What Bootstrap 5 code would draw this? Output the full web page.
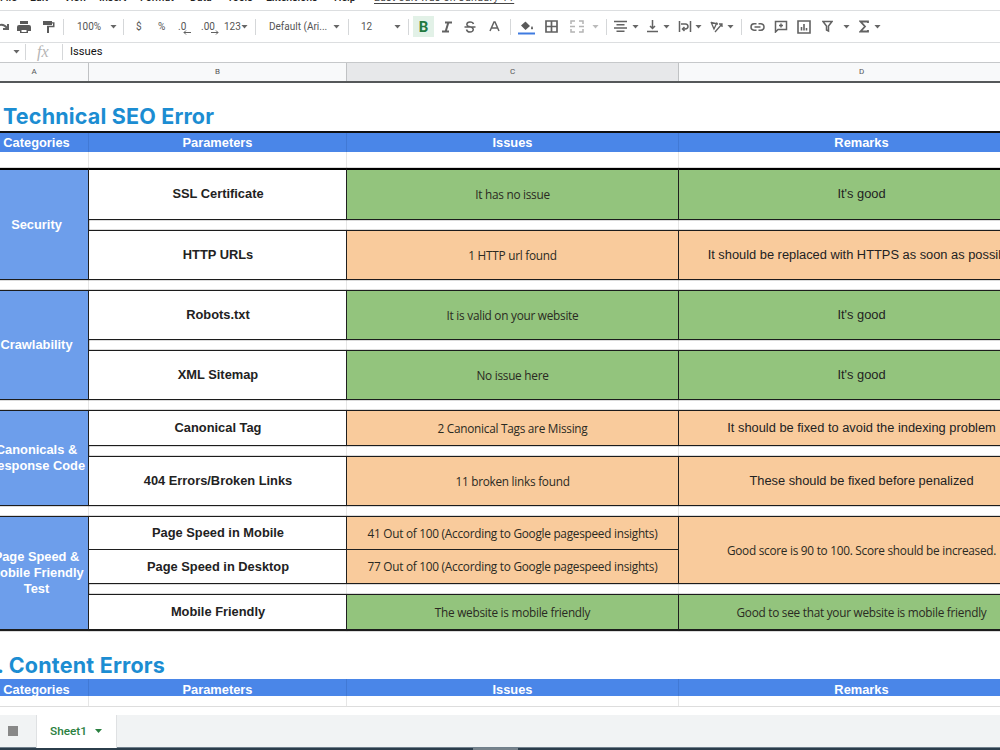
<!DOCTYPE html>
<html lang="en">
<head>
<meta charset="utf-8">
<meta name="viewport" content="width=device-width, initial-scale=1">
<title>SEO audit sheet</title>
<link rel="stylesheet" href="https://cdn.jsdelivr.net/npm/bootstrap@5.3.0/dist/css/bootstrap.min.css">
<style>
body{height:750px;overflow:hidden;background:#fff;font-family:"Liberation Sans",sans-serif;color:#222;font-size:12.85px;line-height:16px}
.menus{height:10px;font:500 10.5px/12px Roboto,sans-serif;color:#222}
.menus>div{display:grid;grid-template-columns:30px 34px 35px 41px 50px 37px 39px 68px 40px 160px;margin-top:-8px;white-space:nowrap}
.menus u{color:#444;font-weight:400;text-underline-offset:2px;letter-spacing:.35px}
.tools{height:33px;border-top:1px solid #dcdee0;border-bottom:1px solid #dcdee0;display:grid;align-items:center;white-space:nowrap;color:#555;font:10px/14px Roboto,sans-serif;
grid-template-columns:17px 25px 21px 14px 33px 13px 13px 22px 20px 23px 23px 17px 14px 14px 64px 15px 13px 33px 14px 5px 28px 23px 25px 21px 8px 27px 25px 22px 14px 8px 18px 15px 16px 15px 17px 15px 17px 14px 9px 24px 23px 25px 21px 16px 15px 20px}
.tools svg{display:block;fill:none;stroke:#626262;stroke-width:1.5}
.tools .solid{fill:#5a5a5a;stroke:none}
.vsep{width:1px;height:16px;background:#d5d7d9}
.tri{width:7px;height:4px;background:#666;clip-path:polygon(0 0,100% 0,50% 100%)}
.tri.dim{background:#bbb}
.dec{position:relative}
.dec svg{position:absolute;left:5px;top:10px}
.boldbtn{width:21px;height:21px;background:#e2f1e7;color:#22793f;font-size:15px}
.fbar{height:19px;color:#111;font:11.2px/16px Roboto,sans-serif;padding-bottom:2px}
.fx{font:italic 16px/16px "Liberation Serif",serif;color:#b5b5b5;margin-left:11px;width:25px}
.namebox{margin-left:13px;margin-right:5px}
.fval{margin-left:7px}
.sheet{width:1062px;margin-left:-17px}
.gridcols{display:grid;grid-template-columns:106px 258px 332px 366px}
.letters{height:21px;border-top:1px solid #c6c8ca;border-bottom:2px solid #55585a;background:#f8f9fa;font:8px/18px Roboto,sans-serif;color:#555;text-align:center}
.letters>div{border-right:1px solid #c0c2c4}
.letters>div:first-child{padding-right:3px}
.letters .picked{background:#e7e8ea}
.heading{height:48px;font:700 21.5px/26px Inter,sans-serif;letter-spacing:.17px;color:#1c8dd2;white-space:pre}
.h-one{padding:20px 0 0 20px}
.h-two{padding-top:21px;letter-spacing:.2px}
.hrow{background:#4a86e8;color:#fff;font-weight:700;text-align:center}
.hrow>div{border-right:1px solid #4179d5}
.hrow.top{height:21px;border-top:2px solid #111;line-height:19px}
.hrow.low{height:17px;line-height:21px}
.hrow>div:first-child,.cat{padding-left:2px}
.blankrow{height:16px}
.blankrow.low{height:11px;border-bottom:1px solid #ddd}
.blankrow>div{border-right:1px solid #e6e6e6}
.body-rows{grid-template-rows:52px 10px 50px 10px 50px 10px 50px 10px 36px 10px 50px 10px 34px 34px 10px 37px;background:linear-gradient(#e6e6e6,#e6e6e6) 105px 0/1px 100% no-repeat,linear-gradient(#e6e6e6,#e6e6e6) 363px 0/1px 100% no-repeat,linear-gradient(#e6e6e6,#e6e6e6) 695px 0/1px 100% no-repeat}
.cellx{display:flex;align-items:center;justify-content:center;text-align:center;white-space:nowrap;border:solid #1c1c1c;border-width:1px 1px 1px 0;box-shadow:0 0 1px #333}
.cat{background:#6d9eeb;color:#fff;font-weight:700;grid-column:1}
.par{background:#fff;font-weight:700;grid-column:2;padding-left:1px}
.iss{grid-column:3}.rem{grid-column:4}
.ok{background:#93c47d}.warn{background:#f9cb9c}
.calib{font-family:"Open Sans",sans-serif;font-size:11.8px;letter-spacing:-.26px;color:#2a2a22;padding-bottom:1px}
.first{border-top-width:2px;border-top-color:#000}
.last{border-bottom-width:2px}
.r1{grid-row:1}.r3{grid-row:3}.r5{grid-row:5}.r7{grid-row:7}.r9{grid-row:9}.r11{grid-row:11}.r13{grid-row:13}.r14{grid-row:14;border-top:0}.r16{grid-row:16}
.r1{padding-bottom:1px}
.g1{grid-row:1/4}.g2{grid-row:5/8}.g3{grid-row:9/12}.g4{grid-row:13/17}.m13{grid-row:13/15}
.tabs{height:32px;margin-top:8px;background:#f1f3f4}
.tab1{width:81px;margin-left:18px;background:#fff;color:#2a8040;font:500 11.8px/33px Roboto,sans-serif;border:solid #dfe1e3;border-width:0 1px;padding-left:13px}
.tab1 .tri{background:#2a8040}
.sq{width:10px;height:10px;background:#888;margin-left:8px}
.dock{height:3px;background:#2b3d4b;border-top:1px solid #71808c}
.dock div{width:45px;height:2px;background:#76828b;margin-left:473px}
</style>
</head>
<body>
<div class="menus overflow-hidden"><div><span>File</span><span>Edit</span><span>View</span><span>Insert</span><span>Format</span><span>Data</span><span>Tools</span><span>Extensions</span><span>Help</span><u>Last edit was on January 11</u></div></div>
<div class="tools">
<svg width="10" height="12"><path d="M0 4Q4 3 7 7M8 3V8H3" stroke-width="2"/></svg>
<svg width="14" height="14" class="solid"><path d="M3 1h8v3H3zM2 5h10q2 0 2 2v4h-3v2H3v-2H0V7q0-2 2-2zm2.500 5v2h5v-2z" fill-rule="evenodd"/></svg>
<svg width="13" height="14" class="solid"><path d="M1 1h9v1.200h2.500v5H7V13H5V5.800h6V3.500H10V5H1z"/></svg>
<i class="vsep"></i><span>100%</span><i class="tri"></i><i class="vsep"></i>
<span>$</span><span>%</span>
<span class="dec">.0<svg width="8" height="5"><path d="M8 2.500H1M3 .5L1 2.500L3 4.500" stroke-width="1"/></svg></span>
<span class="dec">.00<svg width="15" height="5"><path d="M5 2.500H12M10 .5L12 2.500L10 4.500" stroke-width="1"/></svg></span>
<span>123</span><i class="tri"></i><i class="vsep"></i>
<span>Default (Ari...</span><i class="tri"></i><i class="vsep"></i><span>12</span><i class="tri"></i><i class="vsep"></i>
<b class="boldbtn d-flex align-items-center justify-content-center">B</b>
<svg width="12" height="14"><path d="M4 2.500H11M1 11.500H8M7.500 2L4.500 12" stroke-width="2"/></svg>
<svg width="12" height="14"><path d="M9.500 4Q9 2 6 2T2.800 4.500Q3 6 6 6.700T9.300 9.500Q9 12 6 12T2.500 9.500M.5 7H11.500" stroke-width="1.500"/></svg>
<svg width="11" height="14"><path d="M1 11L5 2h1L10 11M2.500 8H8.500"/></svg>
<i class="vsep"></i>
<svg width="17" height="17"><path d="M5 1L12 8L7.500 12L3 7.500L7.500 3.500z" class="solid"/><path d="M14 8q2 3 0 3.500q-2-.5 0-3.500z" class="solid"/><path d="M0 15.500H17" stroke="#3f7be0" stroke-width="2"/></svg>
<svg width="13" height="13"><path d="M1 1H12V12H1zM6.500 1V12M1 6.500H12" stroke-width="1.700"/></svg>
<svg width="14" height="13"><path d="M5 1H1V4M9 1H13V4M5 12H1V9M9 12H13V9M0 6.500H5M14 6.500H9" stroke="#b4b4b4"/></svg>
<i class="tri dim"></i><i class="vsep"></i>
<svg width="13" height="13"><path d="M0 1.500H13M2.500 4.800H10.500M0 8H13M2.500 11.300H10.500"/></svg><i class="tri"></i>
<svg width="11" height="13"><path d="M5.500 0V8M3 6L5.500 8.500L8 6M0 11.500H11"/></svg><i class="tri"></i>
<svg width="14" height="13"><path d="M1.500 1V12M12.500 1V12M3 4H7.500Q10 4.200 10 6.500T7 9H4.500M6.500 7L4.500 9L6.500 11" stroke-width="1.500"/></svg><i class="tri"></i>
<svg width="13" height="13"><path d="M1 2L4 9L7 2.500M1 2.500L8 4M5 12L12 4M9 4H12V7" stroke-width="1.300"/></svg><i class="tri"></i><i class="vsep"></i>
<svg width="15" height="10"><path d="M6.500 1.800H4Q1 2 1 5T4 8.200H6.500M8.500 1.800H11Q14 2 14 5T11 8.200H8.500M4.500 5H10.500"/></svg>
<svg width="14" height="13"><path d="M1.500 12V1.500H12.500V9.500H4zM7 3.500V7.500M5 5.500H9"/></svg>
<svg width="14" height="14"><path d="M1 1H13V13H1zM4.500 10.500V7M7 10.500V4M9.500 10.500V8" stroke-width="1.600"/></svg>
<svg width="11" height="13"><path d="M1 1.500H10L6.500 6V11L4.500 10V6z"/></svg><i class="tri"></i>
<svg width="10" height="13"><path d="M9 3V1.500H1.500L6 6.500L1.500 11.500H9V10" stroke-width="1.800"/></svg><i class="tri"></i>
</div>
<div class="fbar d-flex align-items-center"><i class="tri namebox"></i><i class="vsep"></i><span class="fx">fx</span><i class="vsep"></i><span class="fval">Issues</span></div>
<main class="sheet">
<div class="gridcols letters"><div>A</div><div>B</div><div class="picked">C</div><div>D</div></div>
<div class="heading h-one">Technical SEO Error</div>
<div class="gridcols hrow top"><div>Categories</div><div>Parameters</div><div>Issues</div><div>Remarks</div></div>
<div class="gridcols blankrow"><div></div><div></div><div></div><div></div></div>
<div class="gridcols body-rows">
<div class="cellx cat g1 first">Security</div><div class="cellx cat g2">Crawlability</div><div class="cellx cat g3">Canonicals &amp;<br>Response Code</div><div class="cellx cat g4 last">Page Speed &amp;<br>Mobile Friendly<br>Test</div>
<div class="cellx par r1 first">SSL Certificate</div><div class="cellx iss r1 first ok calib">It has no issue</div><div class="cellx rem r1 first ok">It's good</div>
<div class="cellx par r3">HTTP URLs</div><div class="cellx iss r3 warn calib">1 HTTP url found</div><div class="cellx rem r3 warn">It should be replaced with HTTPS as soon as possible</div>
<div class="cellx par r5">Robots.txt</div><div class="cellx iss r5 ok calib">It is valid on your website</div><div class="cellx rem r5 ok">It's good</div>
<div class="cellx par r7">XML Sitemap</div><div class="cellx iss r7 ok calib">No issue here</div><div class="cellx rem r7 ok">It's good</div>
<div class="cellx par r9">Canonical Tag</div><div class="cellx iss r9 warn calib">2 Canonical Tags are Missing</div><div class="cellx rem r9 warn">It should be fixed to avoid the indexing problem</div>
<div class="cellx par r11">404 Errors/Broken Links</div><div class="cellx iss r11 warn calib">11 broken links found</div><div class="cellx rem r11 warn">These should be fixed before penalized</div>
<div class="cellx par r13">Page Speed in Mobile</div><div class="cellx iss r13 warn calib">41 Out of 100 (According to Google pagespeed insights)</div>
<div class="cellx par r14">Page Speed in Desktop</div><div class="cellx iss r14 warn calib">77 Out of 100 (According to Google pagespeed insights)</div><div class="cellx rem m13 warn calib">Good score is 90 to 100. Score should be increased.</div>
<div class="cellx par r16 last">Mobile Friendly</div><div class="cellx iss r16 ok calib last">The website is mobile friendly</div><div class="cellx rem r16 ok calib last">Good to see that your website is mobile friendly</div>
</div>
<div class="heading h-two">2. Content Errors</div>
<div class="gridcols hrow low"><div>Categories</div><div>Parameters</div><div>Issues</div><div>Remarks</div></div>
<div class="gridcols blankrow low"><div></div><div></div><div></div><div></div></div>
</main>
<div class="tabs d-flex align-items-center"><i class="sq"></i><div class="tab1 d-flex align-items-center gap-2">Sheet1 <i class="tri"></i></div></div>
<div class="dock"><div></div></div>
<script src="https://cdn.jsdelivr.net/npm/bootstrap@5.3.0/dist/js/bootstrap.bundle.min.js"></script>
</body>
</html>
